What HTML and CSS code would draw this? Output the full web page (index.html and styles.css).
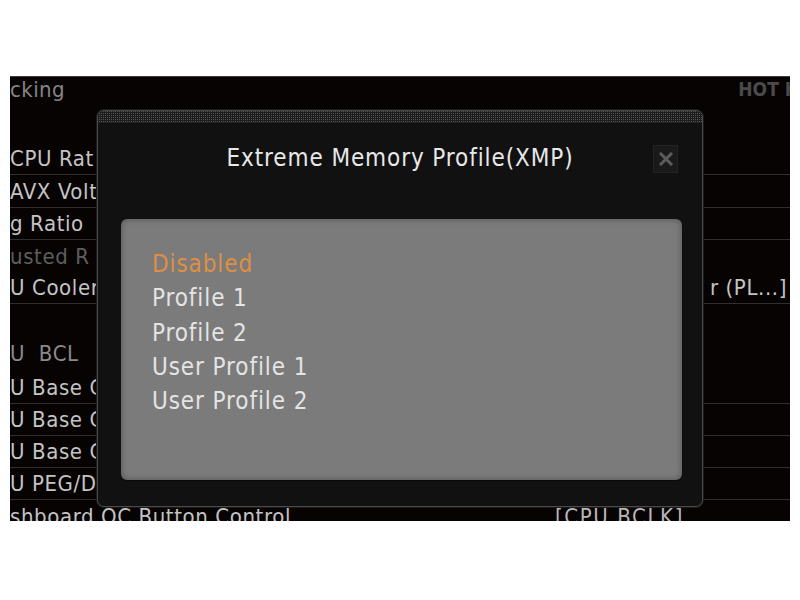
FILE: index.html
```html
<!DOCTYPE html>
<html>
<head>
<meta charset="utf-8">
<link rel="stylesheet" href="styles.css">
</head>
<body>
<div class="screen">
  <div class="bg">
    <div class="top-row">
      <span class="crumb">cking</span>
      <span class="hotkey">HOT K</span>
    </div>
    <div class="row line"><span class="lbl">CPU Rat</span></div>
    <div class="row line r33"><span class="lbl">AVX Volt</span></div>
    <div class="row line"><span class="lbl">g Ratio</span></div>
    <div class="row"><span class="lbl dim">usted R</span></div>
    <div class="row line"><span class="lbl">U Cooler</span><span class="val-right">r (PL...]</span></div>
    <div class="row"></div>
    <div class="row r35"><span class="lbl mid">U&nbsp;&nbsp;BCL</span></div>
    <div class="row line r33"><span class="lbl">U Base C</span></div>
    <div class="row line"><span class="lbl">U Base C</span></div>
    <div class="row line"><span class="lbl">U Base C</span></div>
    <div class="row line"><span class="lbl">U PEG/D</span></div>
    <div class="row last"><span class="lbl">shboard OC Button Control</span><span class="val">[CPU BCLK]</span></div>
  </div>

  <div class="dialog">
    <div class="grip"></div>
    <div class="head">
      <div class="title">Extreme Memory Profile(XMP)</div>
      <div class="close">
        <svg width="14" height="14" viewBox="0 0 14 14"><path d="M2 2 L12 12 M12 2 L2 12" stroke="#5c5c5c" stroke-width="3" stroke-linecap="square"/></svg>
      </div>
    </div>
    <div class="panel">
      <div class="item active">Disabled</div>
      <div class="item">Profile 1</div>
      <div class="item">Profile 2</div>
      <div class="item">User Profile 1</div>
      <div class="item">User Profile 2</div>
    </div>
  </div>
</div>
</body>
</html>
```

FILE: styles.css
```css
html, body {
  margin: 0;
  padding: 0;
  background: #ffffff;
}
body {
  font-family: "DejaVu Sans Condensed", "DejaVu Sans", sans-serif;
  font-stretch: condensed;
}
.screen {
  position: relative;
  margin: 76px 10px 0 10px;
  width: 780px;
  height: 445px;
  background: #070303;
  border-top: 1px solid #3a3a3a;
  box-sizing: border-box;
  overflow: hidden;
}
.bg {
  display: flex;
  flex-direction: column;
}
.top-row {
  height: 65px;
  display: flex;
  justify-content: space-between;
  align-items: flex-start;
  padding-top: 1px;
}
.crumb {
  font-size: 22px;
  line-height: 24px;
  letter-spacing: 0.4px;
  color: #858585;
}
.hotkey {
  font-size: 19px;
  line-height: 22px;
  font-weight: bold;
  color: #4a4a4a;
  margin-right: -8px;
  white-space: nowrap;
}
.row {
  height: 32px;
  box-sizing: border-box;
  display: flex;
  align-items: center;
  position: relative;
  white-space: nowrap;
}
.row.r33 { height: 33px; }
.row.r35 { height: 35px; }
.row.last { align-items: flex-start; padding-top: 4px; }
.row.line {
  border-bottom: 1px solid #2f2f2f;
}
.lbl {
  font-size: 22px;
  letter-spacing: 0.6px;
  color: #c4c4c4;
}
.lbl.dim { color: #5e5e5e; }
.lbl.mid { color: #8a8a8a; }
.val-right {
  margin-left: auto;
  margin-right: 3px;
  font-size: 22px;
  letter-spacing: 0.6px;
  color: #c4c4c4;
}
.val {
  font-size: 22px;
  letter-spacing: 1.6px;
  color: #b8b8b8;
  position: absolute;
  left: 545px;
  top: 4px;
}
.dialog {
  position: absolute;
  left: 87px;
  top: 33px;
  width: 606px;
  height: 397px;
  box-sizing: border-box;
  border: 1px solid #4a4a4a;
  border-radius: 7px;
  background: #111111;
  display: flex;
  flex-direction: column;
  overflow: hidden;
  box-shadow: 0 0 0 1px #1a1a1a;
}
.grip {
  height: 11px;
  flex: none;
  background-color: #1c1c1c;
  background-image: conic-gradient(#555555 25%, transparent 0);
  background-size: 2px 2px;
  border-bottom: 1px solid #222;
}
.head {
  position: relative;
  height: 96px;
  flex: none;
  padding-top: 20px;
  box-sizing: border-box;
}
.title {
  text-align: center;
  font-size: 24px;
  line-height: 30px;
  letter-spacing: 0.9px;
  color: #e8e8e8;
}
.close {
  position: absolute;
  right: 24px;
  top: 22px;
  width: 25px;
  height: 28px;
  box-sizing: border-box;
  background: #1a1a1a;
  border: 1px solid #232323;
  display: flex;
  align-items: center;
  justify-content: center;
}
.close svg { display: block; }
.panel {
  margin: 0 20px 26px 23px;
  flex: 1;
  background: #7b7b7b;
  border-radius: 6px;
  box-shadow: inset 0 0 6px rgba(0,0,0,0.35), 0 1px 1px rgba(0,0,0,0.5);
  padding: 28px 0 0 31px;
}
.item {
  font-size: 24px;
  line-height: 34.3px;
  letter-spacing: 0.9px;
  color: #e4e4e4;
}
.item.active {
  color: #df8f43;
}
```
